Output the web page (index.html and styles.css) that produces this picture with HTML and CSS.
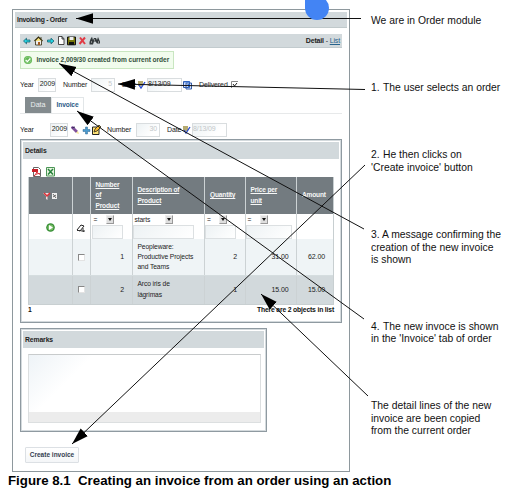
FILE: index.html
```html
<!DOCTYPE html>
<html lang="en">
<head>
<meta charset="utf-8">
<title>Creating an invoice from an order</title>
<link rel="stylesheet" href="styles.css">
</head>
<body>
<main class="figure">
  <div class="columns">
    <section class="window">
      <header class="titlebar">Invoicing - Order</header>
      <div class="content">
        <nav class="toolbar">
          <svg class="tools" viewBox="0 0 78 12">
            <path class="cyan" d="M0.5 6 3.5 3.2V5H7V7H3.5V8.800Z"/>
            <path d="M11.500 6 15.500 2 19.500 6" fill="#f7e37c" stroke="#332b0d" stroke-width="1.200"/><path d="M12.500 6.200V10H18.500V5.500M18 2V4" fill="#eee" stroke="#332b0d" stroke-width=".8"/><path d="M15 7h2v3h-2Z" fill="#a75a20"/>
            <path class="cyan" d="M31 6 28 3.200V5H24.500V7H28V8.800Z"/>
            <path d="M35.500 1.500H39L41 3.800V9.500H35.500ZM39 1.500V4H41" fill="#fff" stroke="#222" stroke-width=".8"/>
            <path d="M44.500 2H52.500V9.800H44.500Z" fill="#77770a" stroke="#111"/><path d="M46.500 2h4v3h-4Z" fill="#eee"/><path d="M46 7h5v3h-5Z" fill="#111"/>
            <path d="M57 2.500 62 9M62 2.500 56.500 9" fill="none" stroke="#e13b45" stroke-width="2"/>
            <path d="M67.500 4 69 1.800 70 5 71 3H73L74 5 75 2 77 6.500V8.500H74L72.500 6.500H71L70 9.500H66.500V7Z" fill="#343b3d"/><path d="M68 7h1M75 7h1M71 5h1" stroke="#ddd"/>
          </svg>
          <span class="views"><b>Detail</b> - <a>List</a></span>
        </nav>
        <div class="message">
          <svg viewBox="0 0 10 10"><circle cx="5" cy="5" r="4.100" fill="#62b755"/><circle cx="5" cy="5" r="3" fill="none" stroke="#9bd58e" stroke-width=".6"/><path d="M2.700 5 4.400 6.700 7.300 3.500" fill="none" stroke="#fff" stroke-width="1.200"/></svg>
          <span>Invoice 2,009/30 created from current order</span>
        </div>
        <div class="fields order">
          <label class="year">Year</label><span class="input short">2009</span>
          <label class="number">Number</label><span class="input pale">5</span>
          <label class="date">Date</label>
          <svg class="icon" viewBox="0 0 9 10"><path d="M1 1h5v5H1Z" fill="#b5aa70"/><path d="m2 5 2 3 4-6" fill="none" stroke="#284ad0" stroke-width="1.300"/></svg>
          <span class="input day">8/13/09</span>
          <svg class="icon cal" viewBox="0 0 9 10"><path d="M.5 1.500h6v6h-6ZM3 3h5.500v6H3Z" fill="#d8e4ff" stroke="#325aa6"/><path d="M1 2h6M4 5h3M5.500 4v4" stroke="#3474dc"/></svg>
          <label class="delivered">Delivered</label><svg class="tick" viewBox="0 0 8 8"><path d="M.5 7V.5H7" fill="none" stroke="#888"/><path d="m2 3 1.500 2L6 2" fill="none" stroke="#222"/></svg>
        </div>
        <div class="tabs"><span class="tab dark">Data</span><span class="tab active">Invoice</span></div>
        <div class="fields invoice">
          <label class="year">Year</label><span class="input short">2009</span>
          <svg class="edit" viewBox="0 0 32 12"><path d="m1 3 2-1 5 5-2 2-5-5Z" fill="#80509b"/><path d="m2 4 3-1" stroke="#332858"/><path d="m6 9 2-2 1 3Z" fill="#f6e990"/><path d="M15.500 3h2v2.500H20v2h-2.500V10h-2V7.500H13v-2h2.500Z" fill="#4a9bd0" stroke="#2c648f" stroke-width=".5"/><path d="M22.500 3h6.500v7.500h-6.500Z" fill="#ffe477" stroke="#222"/><path d="m24 8 1-3 4-4 2 2-4 4Z" fill="#f7b82e" stroke="#2a2a20" stroke-width=".8"/></svg>
          <label class="number">Number</label><span class="input pale">30</span>
          <label class="date">Date</label>
          <svg class="icon" viewBox="0 0 9 10"><path d="M1 1h5v5H1Z" fill="#b5aa70"/><path d="m2 5 2 3 4-6" fill="none" stroke="#284ad0" stroke-width="1.300"/></svg>
          <span class="input day faded">8/13/09</span>
        </div>
        <section class="panel details">
          <h2>Details</h2>
          <div class="exports">
            <svg viewBox="0 0 9 10"><path d="M1.500.5h5l2 2v7h-7Z" fill="#fff" stroke="#666"/><path d="M0 2h6v3H0Z" fill="#c71f28"/><path d="M2 9c2-2 3-4 3-5 0 2 2 3 3 3-2-1-4 0-6 2Z" stroke="#d52c33" fill="none"/></svg>
            <svg viewBox="0 0 9 10"><path d="M.5.5h8v8.500h-8Z" fill="#e8f4df" stroke="#4c9657"/><path d="m2 2 5 5.500M7 2 2 7.500" stroke="#25823c" stroke-width="1.500"/></svg>
          </div>
          <div class="table">
            <div class="row head">
              <div class="center"><svg class="filter" viewBox="0 0 15 8"><path d="M0 1h7L4.500 4v4L3 7V4Z" fill="#f3dede"/><path d="m1 1 3 3 3-3" stroke="#df3038" fill="none" stroke-width="1.500"/><path d="M9 1h5v6H9Z" fill="#f1f1f1"/><path d="m10 2 3 4m0-3-3 2" stroke="#444" stroke-width=".8"/></svg></div>
              <div></div><div><u>Number<br>of<br>Product</u></div><div><u>Description of<br>Product</u></div><div><u>Quantity</u></div><div><u>Price per<br>unit</u></div><div class="amount">Amount</div>
            </div>
            <div class="row filters">
              <div class="center"><svg class="play" viewBox="0 0 9 9"><circle cx="4.500" cy="4.500" r="4.300" fill="#368e35"/><circle cx="4.500" cy="4.500" r="3" fill="#79bd67"/><path d="M3 2v5l4-2.500Z" fill="#fff"/></svg></div>
              <div class="center"><svg class="eraser" viewBox="0 0 10 9"><path d="m1 6 4-5 3 1-4 5Z" fill="#fff" stroke="#222"/><path d="M1 6.500h3l4 1M7 4v3h2" fill="none" stroke="#333"/></svg></div>
              <div><span class="select"><i>=</i><b></b></span><span class="box"></span></div>
              <div class="desc"><span class="select"><i>starts</i><b></b></span><span class="box"></span></div>
              <div class="tight"><span class="select"><i>=</i><b></b></span><span class="box"></span></div>
              <div class="tight price"><span class="select"><i>=</i><b></b></span><span class="box"></span></div>
              <div></div>
            </div>
            <div class="row light"><div></div><div class="center"><span class="check"></span></div><div class="num">1</div><div>Peopleware:<br>Productive Projects<br>and Teams</div><div class="num">2</div><div class="num">31.00</div><div class="num">62.00</div></div>
            <div class="row shade"><div></div><div class="center"><span class="check"></span></div><div class="num">2</div><div>Arco iris de<br>lágrimas</div><div class="num">1</div><div class="num">15.00</div><div class="num">15.00</div></div>
          </div>
          <footer class="summary"><b>1</b><b class="objects">There are 2 objects in list</b></footer>
        </section>
        <section class="panel remarks"><h2>Remarks</h2><div class="textarea"></div></section>
        <button class="create">Create invoice</button>
      </div>
    </section>
    <aside class="notes">
      <p>We are in Order module</p>
      <p class="n1"><span class="step">1.</span>The user selects an order</p>
      <p class="n2"><span class="step">2.</span>He then clicks on<br>'Create invoice' button</p>
      <p class="n3">3. A message confirming the<br>creation of the new invoice<br>is shown</p>
      <p class="n4"><span class="step">4.</span>The new invoce is shown<br>in the 'Invoice' tab of order</p>
      <p class="n5">The detail lines of the new<br>invoice are been copied<br>from the current order</p>
    </aside>
  </div>
  <p class="caption">Figure 8.1&nbsp; Creating an invoice from an order using an action</p>
  <svg class="arrows" viewBox="0 0 520 495">
    <defs><marker id="head" viewBox="0 0 17 12" refX="17" refY="6" markerWidth="17" markerHeight="12" markerUnits="userSpaceOnUse" orient="auto"><path d="M0 .7 17 6 0 11.300Z"/></marker></defs>
    <path d="M361 18.500H76"/><path d="M365 89.500 118 84"/><path d="M365 165 72 444"/><path d="M364 229 59 63.500"/><path d="M364 319 77 111"/><path d="M368 396 261 294"/>
  </svg>
  <span class="drop"></span>
</main>
</body>
</html>
```

FILE: styles.css
```css
* { box-sizing: border-box; }
body { margin: 0; background: #fff; color: #222; font: 7px/10px "Liberation Sans", sans-serif; }
.figure { position: relative; width: 520px; height: 495px; overflow: hidden; padding: 9px 0 0 12px; }
.columns { display: flex; height: 462.500px; }
.window { width: 338px; flex: none; border: 1px solid #8e989d; padding: 2px; height: 462.500px; letter-spacing: -.1px; }
.titlebar { height: 16px; background: #d2d9dc; border-bottom: 1px solid #c0c9cb; font-weight: bold; padding: 3px 2px; font-size: 6.800px; letter-spacing: -.25px; }
.content { padding: 6px 5px 0; }
.toolbar { height: 14px; background: #d2d9dc; border-bottom: 1px solid #c2cbce; display: flex; justify-content: space-between; align-items: center; padding: 0 2px 0 3px; }
.tools { width: 78px; height: 12px; }
.cyan { fill: #25d3e2; stroke: #176272; stroke-width: .8; }
.views { font-size: 7px; letter-spacing: -.15px; white-space: nowrap; }
.views a { color: #27638c; text-decoration: underline; }
.message { width: 154px; height: 18px; margin-top: 3px; border: 1px solid #c9e6c1; background: #f1fced; display: flex; align-items: center; padding-left: 2px; gap: 3.500px; font-weight: bold; color: #34513b; white-space: nowrap; }
.message svg { width: 10px; height: 10px; }
.message span { font-size: 6.600px; letter-spacing: -.06px; }
.fields { display: flex; align-items: center; height: 14px; }
.order { margin-top: 9px; }
.year { width: 18px; flex: none; }
.input { display: block; height: 14px; border: 1px solid #d9dddf; background: linear-gradient(135deg, #edf2f4, #fff 75%); text-align: right; flex: none; }
.short { width: 18px; }
.number { width: 28px; margin-left: 7px; }
.pale { width: 24px; color: #c3c8ca; padding-right: 2px; }
.date { width: 15px; margin-left: 7px; }
.icon { width: 9px; height: 10px; flex: none; }
.day { width: 35px; margin-left: 1px; text-align: left; white-space: nowrap; font-size: 7px; }
.cal { margin-left: 1px; }
.delivered { margin-left: 7px; width: 32px; }
.tick { width: 8px; height: 8px; }
.tabs { display: flex; height: 18px; margin-top: 4px; padding: 1px 0 0 5px; border-bottom: 1px solid #e7e9ea; }
.tab { height: 16px; padding-top: 3px; text-align: center; }
.dark { width: 26px; background: #838b8e; color: #e9edee; font-size: 7.200px; }
.active { width: 33px; border: 1px solid #e2e6e8; border-bottom: 0; color: #2c5b88; font-weight: bold; padding-top: 2px; font-size: 6.600px; }
.invoice { margin-top: 9px; }
.invoice .year { width: 30px; }
.edit { width: 32px; height: 12px; margin-left: 2px; }
.invoice .number { margin-left: 5px; width: 29px; }
.faded { color: #c2c7c9; }
.panel { border: 1px solid #8f9aa1; outline: 1px solid #d4dadd; outline-offset: -2px; padding: 2px; }
.panel h2 { height: 17px; margin: 0; background: #d2d9dc; font: bold 6.800px/17px "Liberation Sans", sans-serif; padding-left: 2px; }
.details { margin-top: 2px; height: 184px; }
.exports { height: 18px; display: flex; gap: 5px; padding: 8px 0 0 9px; }
.exports svg { width: 9px; height: 10px; }
.table { margin-left: 5px; width: 305.500px; border: solid #c8cfd1; border-width: 0 1px 1px; }
.row { display: grid; grid-template-columns: 42.500px 18px 42px 72.500px 40.500px 51.500px 1fr; }
.row > div { border-left: 1px solid #ccd2d4; padding: 0 5px; display: flex; align-items: center; min-width: 0; white-space: nowrap; line-height: 10.300px; font-size: 6.700px; }
.row > div:first-child { border-left: 0; }
.row > .center { justify-content: center; padding: 0; }
.head { height: 37px; background: #737b80; color: #f6f7f7; font-weight: bold; }
.head > div { font-size: 6.600px; letter-spacing: -.18px; }
.head > .amount { padding: 0 5px; }
.filter { width: 15px; height: 8px; }
.play { width: 9px; height: 9px; margin-top: 2px; }
.eraser { width: 10px; height: 9px; margin-top: 3px; }
.filters { height: 25px; }
.filters > div:not(.center) { display: block; padding: 1px 0 0 1px; }
.select { display: flex; width: 22px; height: 9px; justify-content: space-between; padding-left: 2px; }
.select i { font-style: normal; line-height: 9px; }
.select b { width: 8px; height: 9px; background: #dedede; border: 1px solid #999; border-top-color: #eee; border-left-color: #eee; display: grid; place-items: center; }
.select b::after { content: ""; border: 2px solid transparent; border-top: 3px solid #111; border-bottom: 0; }
.box { display: block; width: 31px; height: 14px; margin-top: 1px; border: 1px solid #dce0e2; background: linear-gradient(135deg, #edf2f4, #fff); }
.filters > .desc, .filters > .tight { padding-left: 0 !important; }
.desc .select { width: 40px; padding-left: 2px; }
.desc .box { width: 61px; }
.price .box { width: 46px; }
.light { height: 37px; background: #eff4f6; border-bottom: 1px solid #d5dddf; }
.shade { height: 27.500px; background: #d2d9dc; }
.row > .num { justify-content: flex-end; padding-right: 7.500px; font-size: 7px; }
.check { width: 7px; height: 7px; background: #fff; border: 1px solid #e3e3e3; border-top-color: #888; border-left-color: #888; }
.summary { display: flex; justify-content: space-between; color: #111; padding: 0 5px; font-size: 6.800px; letter-spacing: -.17px; }
.remarks { width: 247px; height: 104px; margin-top: 4.500px; }
.textarea { width: 233px; height: 69px; margin: 6px 0 0 5px; border: 1px solid #dcdfe0; border-top-color: #c8cbcc; background: linear-gradient(#ececec, #ececec) bottom / 100% 10px no-repeat, linear-gradient(135deg, #eef3f7, #fff 22%); }
.create { display: block; width: 54px; height: 16px; margin: 15.500px 0 0 5px; padding: 0; border: 1px solid #dce0e4; border-radius: 1px; background: linear-gradient(#fff, #f4f6f8); color: #344050; font: bold 6.500px/12px "Liberation Sans", sans-serif; white-space: nowrap; }
.notes { width: 149px; padding: 6px 0 0 21px; font-size: 10.350px; line-height: 12.500px; color: #111; white-space: nowrap; }
.notes p { margin: 0; }
.step { display: inline-block; width: 12px; }
.notes .n1 { margin-top: 54.500px; }
.notes .n2 { margin-top: 54.500px; }
.notes .n3 { margin-top: 55px; }
.notes .n4 { margin-top: 54px; }
.notes .n5 { margin-top: 54.500px; }
.caption { margin: 1px 0 0 -4px; color: #000; font-weight: bold; font-size: 13.280px; line-height: 16px; white-space: nowrap; }
.arrows { position: absolute; inset: 0; width: 520px; height: 495px; }
.arrows > path { fill: none; stroke: #111; stroke-width: 1; marker-end: url(#head); }
.drop { position: absolute; left: 305px; top: -4px; width: 24px; height: 24px; background: #4384f4; border-radius: 0 12px 12px 12px; }
```
